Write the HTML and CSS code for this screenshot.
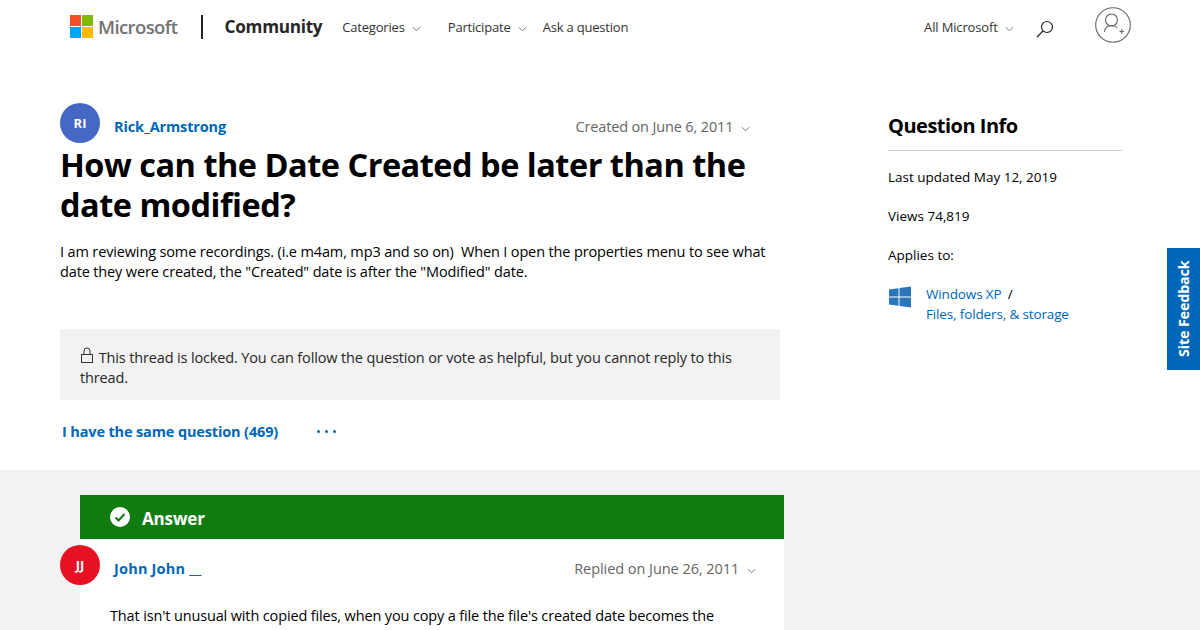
FILE: index.html
```html
<!DOCTYPE html>
<html lang="en">
   <head>
      <meta charset="UTF-8">
      <meta name="viewport" content="width=device-width, initial-scale=1.0">
      <title>How can the Date Created be later than the date modified?</title>
      <link rel="stylesheet" href="styles.css">
   </head>
   <body>
      <header class="site-header">
         <div class="ms-logo">
            <svg class="ms-squares" width="23" height="23" viewBox="0 0 23 23">
               <rect width="11" height="11" fill="#f25022"/>
               <rect x="12" width="11" height="11" fill="#7fba00"/>
               <rect y="12" width="11" height="11" fill="#00a4ef"/>
               <rect x="12" y="12" width="11" height="11" fill="#ffb900"/>
            </svg>
            <span class="ms-word">Microsoft</span>
         </div>
         <div class="divider"></div>
         <a class="brand">Community</a>
         <nav class="main-nav">
            <a class="nav-categories">Categories <svg class="chev" viewBox="0 0 10 6"><path d="M1 1l4 4 4-4"/></svg></a>
            <a class="nav-participate">Participate <svg class="chev" viewBox="0 0 10 6"><path d="M1 1l4 4 4-4"/></svg></a>
            <a>Ask a question</a>
         </nav>
         <div class="header-right">
            <a class="all-ms">All Microsoft <svg class="chev" viewBox="0 0 10 6"><path d="M1 1l4 4 4-4"/></svg></a>
            <svg class="search-icon" width="18" height="18" viewBox="0 0 18 18"><circle cx="11" cy="7" r="5.5"/><path d="M7 11l-6 6"/></svg>
            <svg class="user-icon" width="36" height="36" viewBox="0 0 36 36">
               <circle cx="18" cy="18" r="17.3"/>
               <circle cx="16.500" cy="13" r="6"/>
               <path d="M9.5 25c.5-4.500 3.500-6.500 7-6.500 2.500 0 4.500.8 6 2.500"/>
               <path d="M24.500 24.500h4.500M26.700 22.300v4.500"/>
            </svg>
         </div>
      </header>

      <main class="question-area">
         <div class="question">
            <div class="meta-row">
               <div class="avatar avatar-blue">RI</div>
               <a class="author">Rick_Armstrong</a>
               <span class="post-date">Created on June 6, 2011 <svg class="chev" viewBox="0 0 10 6"><path d="M1 1l4 4 4-4"/></svg></span>
            </div>
            <h1>How can the Date Created be later than the date modified?</h1>
            <p class="question-body">I am reviewing some recordings. (i.e m4am, mp3 and so on)&nbsp; When I open the properties menu to see what date they were created, the "Created" date is after the "Modified" date.</p>
            <div class="locked-note">
               <svg class="lock-icon" width="14" height="16" viewBox="0 0 14 16"><rect x="1.500" y="7.500" width="11" height="8"/><path d="M4 7.500V4a3 3 0 0 1 6 0v3.500"/></svg>
               This thread is locked. You can follow the question or vote as helpful, but you cannot reply to this thread.
            </div>
            <div class="vote-row">
               <a class="same-question">I have the same question (469)</a>
               <span class="more-dots"><i></i><i></i><i></i></span>
            </div>
         </div>
         <aside class="info">
            <h2>Question Info</h2>
            <p>Last updated May 12, 2019</p>
            <p>Views 74,819</p>
            <p>Applies to:</p>
            <div class="applies">
               <svg class="win-icon" width="22" height="22" viewBox="0 0 23 22"><path d="M0 3.200l10-1.400v8.700H0zM11 1.600L23 0v10.500H11zM0 11.500h10v8.700L0 18.800zM11 11.500h12V22l-12-1.600z"/></svg>
               <div>
                  <a>Windows XP</a><span class="slash"> / </span><br>
                  <a>Files, folders, &amp; storage</a>
               </div>
            </div>
         </aside>
      </main>

      <section class="answer-area">
         <div class="answer-bar">
            <svg width="20" height="20" viewBox="0 0 20 20"><circle cx="10" cy="10" r="10" fill="#fff"/><path d="M5.500 10.500l3 3 6-6.500" fill="none" stroke="#107c10" stroke-width="2"/></svg>
            <span>Answer</span>
         </div>
         <div class="answer-card">
            <div class="meta-row answer-meta">
               <div class="avatar avatar-red">JJ</div>
               <a class="author">John John __</a>
               <span class="post-date">Replied on June 26, 2011 <svg class="chev" viewBox="0 0 10 6"><path d="M1 1l4 4 4-4"/></svg></span>
            </div>
            <p class="answer-text">That isn't unusual with copied files, when you copy a file the file's created date becomes the</p>
         </div>
      </section>

      <a class="site-feedback">Site Feedback</a>
   </body>
</html>
```

FILE: styles.css
```css
/* Community question page */
html, body {
margin: 0;
height: 630px;
overflow: hidden;
}
body {
font-family: "Open Sans", "Noto Sans", sans-serif;
font-size: 14px;
letter-spacing: -0.14px;
color: #000;
background-color: #fff;
}
a {
color: #0067b8;
}
.chev {
width: 9px;
height: 6px;
margin-left: 4px;
fill: none;
stroke: #666;
stroke-width: 1;
}

/* header */
.site-header {
display: flex;
align-items: center;
height: 53px;
padding-left: 70px;
padding-right: 69px;
}
.ms-logo {
display: flex;
align-items: center;
}
.ms-word {
font-size: 18.500px;
font-weight: 600;
color: #737373;
margin-left: 5px;
letter-spacing: -0.6px;
}
.divider {
width: 2px;
height: 24px;
background-color: #222;
margin-left: 23px;
margin-right: 22px;
}
.brand {
font-size: 17.200px;
font-weight: 700;
color: #262626;
letter-spacing: -0.3px;
}
.main-nav {
display: flex;
margin-left: 20px;
font-size: 13px;
letter-spacing: -0.2px;
}
.main-nav a, .all-ms {
color: #333;
}
.nav-categories {
margin-right: 27px;
}
.nav-participate {
margin-right: 16px;
}
.header-right {
display: flex;
align-items: center;
margin-left: auto;
font-size: 13px;
}
.search-icon {
margin-left: 22px;
margin-top: 4px;
fill: none;
stroke: #222;
stroke-width: 1.2;
}
.user-icon {
margin-left: 41px;
margin-top: -3px;
fill: none;
stroke: #666;
stroke-width: 1.1;
}

/* question */
.question-area {
display: flex;
height: 417px;
padding-left: 60px;
}
.question {
width: 720px;
}
.meta-row {
display: flex;
align-items: center;
height: 40px;
margin-top: 50px;
}
.avatar {
flex: none;
width: 40px;
height: 40px;
border-radius: 50%;
color: #fff;
font-size: 13px;
font-weight: 700;
line-height: 40px;
text-align: center;
letter-spacing: 0;
}
.avatar-blue {
background-color: #4668c5;
}
.avatar-red {
background-color: #e81123;
}
.author {
margin-left: 14px;
margin-top: 7px;
font-size: 14.500px;
font-weight: 700;
}
.post-date {
margin-left: auto;
margin-top: 7px;
margin-right: 30px;
color: #666;
font-size: 14.500px;
}
h1 {
margin: 2px 0 0;
font-size: 32.500px;
line-height: 40px;
font-weight: 700;
letter-spacing: -0.5px;
}
.question-body {
margin: 17px 0 0;
line-height: 20px;
font-size: 14.500px;
}
.locked-note {
margin-top: 47px;
padding: 18px 20px 12px;
background-color: #f2f2f2;
line-height: 20px;
font-size: 14.500px;
color: #262626;
}
.lock-icon {
margin-right: 1px;
fill: none;
stroke: #333;
stroke-width: 1;
}
.vote-row {
display: flex;
align-items: center;
margin-top: 22px;
padding-left: 2px;
}
.same-question {
font-size: 14.500px;
font-weight: 700;
}
.more-dots {
display: flex;
gap: 5px;
margin-left: 39px;
}
.more-dots i {
width: 3px;
height: 3px;
border-radius: 50%;
background-color: #0067b8;
}

/* sidebar */
.info {
width: 234px;
margin-left: 108px;
padding-top: 59px;
}
.info h2 {
margin: 0;
padding-bottom: 10px;
border-bottom: 1px solid #ccc;
font-size: 20px;
line-height: 28px;
font-weight: 700;
letter-spacing: -0.5px;
}
.info p {
margin: 16px 0 0;
line-height: 20px;
font-size: 13.500px;
letter-spacing: 0;
}
.info p + p {
margin-top: 19px;
}
.applies {
display: flex;
margin-top: 19px;
line-height: 20px;
font-size: 13.500px;
}
.win-icon {
flex: none;
margin: 2px 15px 0 1px;
fill: #2b75bb;
}
.slash {
margin-left: 3px;
}

/* answer */
.answer-area {
height: 160px;
box-sizing: border-box;
padding: 25px 0 0 80px;
background-color: #f2f2f2;
}
.answer-bar {
display: flex;
align-items: center;
width: 704px;
height: 44px;
box-sizing: border-box;
padding-left: 30px;
background-color: #107c10;
color: #fff;
font-size: 17px;
font-weight: 700;
}
.answer-bar span {
margin-left: 12px;
margin-top: 2px;
}
.answer-card {
width: 704px;
height: 100px;
background-color: #fff;
}
.answer-meta {
margin-top: 0;
padding-top: 6px;
margin-left: -20px;
}
.answer-meta .author {
letter-spacing: 0.2px;
}
.answer-meta .post-date {
margin-right: 28px;
letter-spacing: -0.05px;
}
.answer-text {
margin: 21px 0 0 30px;
line-height: 20px;
font-size: 14.500px;
}

/* feedback tab sits over the page */
.site-feedback {
position: absolute;
top: 248px;
right: 0;
width: 33px;
height: 122px;
background-color: #0067b8;
color: #fff;
font-size: 14.300px;
font-weight: 700;
line-height: 33px;
text-align: center;
writing-mode: vertical-rl;
transform: rotate(180deg);
}
```
